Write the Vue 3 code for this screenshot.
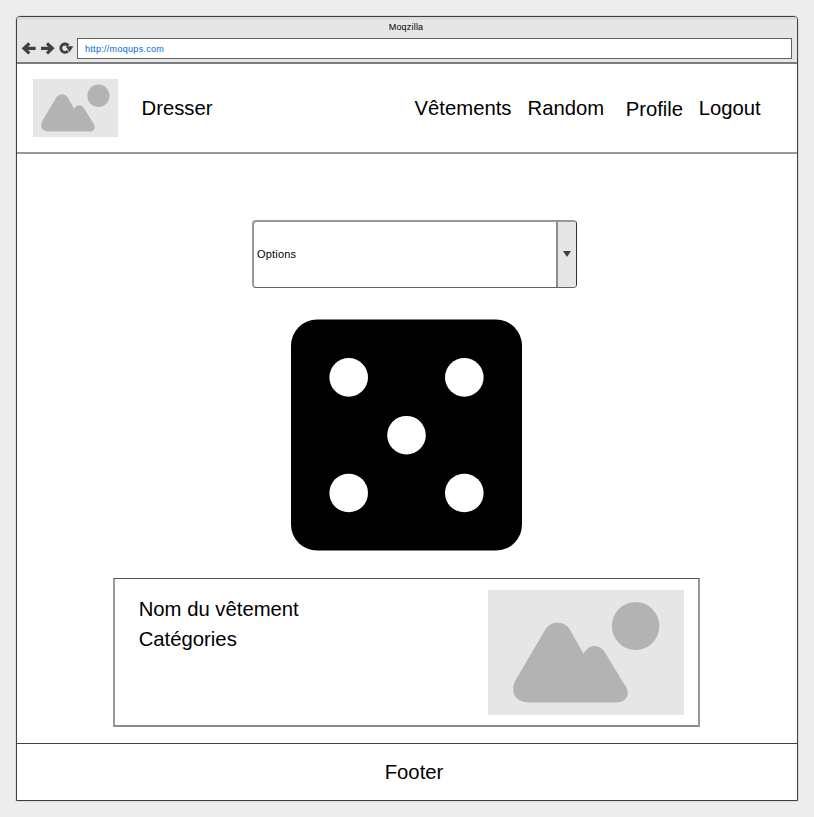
<script setup>
import { h } from 'vue'

const navItems = [
  { label: 'Vêtements', cls: 'clothes' },
  { label: 'Random', cls: 'random' },
  { label: 'Profile', cls: 'profile' },
  { label: 'Logout', cls: 'logout' },
]

const pips = [
  [57.7, 57.8],
  [173.3, 57.8],
  [115.5, 115.6],
  [57.7, 173.4],
  [173.3, 173.4],
]

const Placeholder = () =>
  h('svg', { viewBox: '0 0 587 375', preserveAspectRatio: 'xMidYMid slice' }, [
    h('rect', { x: -10, y: -10, width: 607, height: 395, fill: '#e6e6e6' }),
    h('ellipse', { cx: 442, cy: 108, rx: 71, ry: 72, fill: '#b3b3b3' }),
    h('path', {
      fill: '#b3b3b3',
      d: 'M126 337C81 337 66 308 81 273L168 125C188 89 229 89 249 125L286 191C303 161 332 162 348 184L411 287C428 312 415 337 386 337Z',
    }),
  ])
</script>

<template>
  <div class="page">
    <div class="window">
      <div class="chrome">
        <div class="title">Moqzilla</div>
        <div class="toolbar">
          <svg class="controls" viewBox="36 93 156 42" fill="none" stroke="#404040" stroke-width="9.5">
            <path d="M58 97L42 112L58 127M44 112H77" />
            <path d="M111 97L127 112L111 127M125 112H93" />
            <path d="M174 120A12.5 12.5 0 1 1 175 104" stroke-width="8.5" />
            <path d="M167 106H190L179 123Z" fill="#404040" stroke="none" />
          </svg>
          <div class="url">http://moqups.com</div>
        </div>
      </div>

      <header class="header">
        <Placeholder class="logo" />
        <span class="brand">Dresser</span>
        <nav class="nav">
          <span v-for="item in navItems" :key="item.label" :class="item.cls">{{ item.label }}</span>
        </nav>
      </header>

      <main class="main">
        <div class="select">
          <span class="value">Options</span>
          <span class="toggle">
            <svg viewBox="0 0 8 6"><path d="M0 0H8L4 6Z" fill="#404040" /></svg>
          </span>
        </div>

        <svg class="dice" viewBox="0 0 231 232">
          <g transform="translate(0 .6)">
            <rect width="231" height="231" rx="26" />
            <circle v-for="(p, i) in pips" :key="i" :cx="p[0]" :cy="p[1]" r="19.3" fill="#fff" />
          </g>
        </svg>

        <section class="card">
          <div class="details">
            <div>Nom du vêtement</div>
            <div>Catégories</div>
          </div>
          <Placeholder class="photo" />
        </section>
      </main>

      <footer class="footer">Footer</footer>
    </div>
  </div>
</template>

<style>
body {
  background: #ededed;
}
</style>

<style scoped>
.page {
  box-sizing: border-box;
  height: 817px;
  padding: 16px;
  font: 20.3px/30px "Liberation Sans", Arial, sans-serif;
  color: #000;
}
.window {
  box-sizing: border-box;
  display: flex;
  flex-direction: column;
  width: 782px;
  height: 785px;
  border: 1px solid #404040;
  border-radius: 4px 4px 0 0;
  background: #fff;
  box-shadow: 0 0 0 1px #dcdcdc;
}
.chrome {
  box-sizing: border-box;
  height: 47px;
  background: #e6e6e6;
  border-top: 3px solid #dcdcdc;
  border-bottom: 2px solid #7c7c7c;
  border-radius: 3px 3px 0 0;
}
.title {
  height: 18px;
  padding-right: 2px;
  text-align: center;
  font-size: 9px;
  line-height: 14px;
  letter-spacing: 0.2px;
}
.toolbar {
  display: flex;
  align-items: center;
  padding-left: 5px;
}
.controls {
  width: 52px;
  height: 14px;
  margin-right: 3px;
}
.url {
  box-sizing: border-box;
  width: 715px;
  height: 21px;
  padding-left: 7px;
  border: 1px solid #606060;
  background: #fff;
  color: #0066dd;
  font-size: 9px;
  line-height: 20px;
  letter-spacing: 0.3px;
}
.header {
  box-sizing: border-box;
  display: flex;
  height: 90px;
  padding-top: 14px;
  border-bottom: 2px solid #999;
}
.logo {
  width: 84.5px;
  height: 58.5px;
  margin: 0.5px 0 0 16px;
}
.brand {
  margin: 15px 0 0 24px;
}
.nav {
  display: flex;
  margin: 15px 36.3px 0 auto;
}
.random {
  margin-left: 16px;
}
.profile {
  padding-top: 1px;
  margin-left: 21.5px;
}
.logout {
  margin-left: 15.5px;
}
.main {
  display: flex;
  flex-direction: column;
  flex: 1;
}
.select {
  box-sizing: border-box;
  display: flex;
  width: 325px;
  height: 68px;
  margin: 66px 0 0 235px;
  border-style: solid;
  border-width: 2px 1px 1px 2px;
  border-color: #999 #303030 #606060 #999;
  border-radius: 4px;
  overflow: hidden;
}
.value {
  flex: 1;
  padding-left: 3px;
  font-size: 11px;
  line-height: 65px;
  letter-spacing: 0.2px;
}
.toggle {
  box-sizing: border-box;
  display: flex;
  width: 20px;
  align-items: center;
  justify-content: center;
  border-left: 2px solid #8c8c8c;
  background: #e6e6e6;
}
.toggle svg {
  width: 8px;
  height: 6px;
  margin-bottom: 1px;
}
.dice {
  width: 231px;
  height: 232px;
  margin: 31px 0 0 274px;
}
.card {
  box-sizing: border-box;
  display: flex;
  justify-content: space-between;
  width: 587px;
  height: 149px;
  margin: 27px 0 0 96px;
  padding: 11px 14px 0 23.7px;
  border-style: solid;
  border-width: 1px 2px 2px 2px;
  border-color: #505050 #999 #8c8c8c #999;
}
.details {
  margin-top: 4px;
}
.photo {
  width: 196px;
  height: 125px;
  margin-right: 0;
}
.footer {
  box-sizing: border-box;
  height: 57px;
  padding: 13px 0 0 14px;
  border-top: 1px solid #444;
  text-align: center;
}
</style>
